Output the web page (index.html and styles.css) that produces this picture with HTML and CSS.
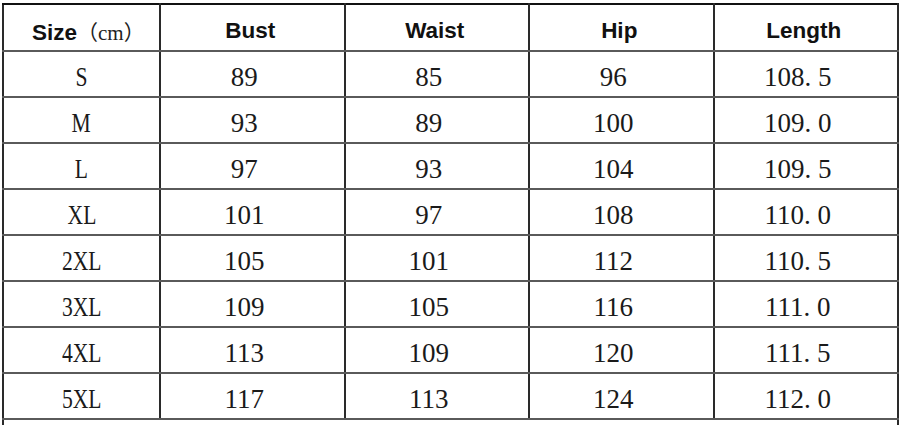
FILE: index.html
```html
<!DOCTYPE html>
<html lang="en">
<head>
<meta charset="utf-8">
<title>Size chart</title>
<link rel="stylesheet" href="styles.css">
</head>
<body>
<table class="chart">
  <colgroup>
    <col class="c-size"><col class="c-num"><col class="c-num"><col class="c-num"><col class="c-num">
  </colgroup>
  <thead>
    <tr class="head">
      <th class="first">Size<span class="unit">（cm）</span></th>
      <th>Bust</th>
      <th>Waist</th>
      <th>Hip</th>
      <th>Length</th>
    </tr>
  </thead>
  <tbody>
    <tr><td class="sz"><span>S</span></td><td>89</td><td>85</td><td>96</td><td>108<span class="dot">.</span>5</td></tr>
    <tr><td class="sz"><span>M</span></td><td>93</td><td>89</td><td>100</td><td>109<span class="dot">.</span>0</td></tr>
    <tr><td class="sz"><span>L</span></td><td>97</td><td>93</td><td>104</td><td>109<span class="dot">.</span>5</td></tr>
    <tr><td class="sz"><span>XL</span></td><td>101</td><td>97</td><td>108</td><td>110<span class="dot">.</span>0</td></tr>
    <tr><td class="sz"><span>2XL</span></td><td>105</td><td>101</td><td>112</td><td>110<span class="dot">.</span>5</td></tr>
    <tr><td class="sz"><span>3XL</span></td><td>109</td><td>105</td><td>116</td><td>111<span class="dot">.</span>0</td></tr>
    <tr><td class="sz"><span>4XL</span></td><td>113</td><td>109</td><td>120</td><td>111<span class="dot">.</span>5</td></tr>
    <tr><td class="sz"><span>5XL</span></td><td>117</td><td>113</td><td>124</td><td>112<span class="dot">.</span>0</td></tr>
    <tr class="extra"><td colspan="5"></td></tr>
  </tbody>
</table>
</body>
</html>
```

FILE: styles.css
```css
html, body {
  margin: 0;
  padding: 0;
  background: #ffffff;
}

body {
  padding: 3px 0 0 2px;
  overflow: hidden;
  height: 425px;
  box-sizing: border-box;
}

.chart {
  border-collapse: collapse;
  table-layout: fixed;
  width: 895px;
  border: 2px solid #111111;
}

.c-size { width: 157px; }
.c-num { width: 184.5px; }

.chart th,
.chart td {
  border-left: 2px solid #2a2a2a;
  border-right: 2px solid #2a2a2a;
  border-top: 2px solid #5a5a5a;
  border-bottom: 2px solid #5a5a5a;
  padding: 0;
  text-align: center;
  vertical-align: middle;
}

.chart .head {
  height: 47px;
}

.chart .head th {
  font-family: "Liberation Sans", Arial, sans-serif;
  font-weight: bold;
  font-size: 22.5px;
  color: #111111;
  padding: 6px 4px 0 0;
  border-top: 2px solid #111111;
}

.chart .head th.first {
  padding: 6px 0 0 0;
  text-align: left;
  padding-left: 28px;
}

.unit {
  font-family: "Liberation Serif", "Noto Sans CJK SC", serif;
  font-weight: normal;
  font-size: 21px;
  color: #222222;
}

.chart tbody tr {
  height: 46px;
}

.chart tbody td {
  font-family: "Liberation Serif", "Times New Roman", serif;
  font-size: 27px;
  color: #1a1a1a;
  padding: 6px 16px 0 0;
  line-height: 1;
}

.chart tbody td.sz {
  padding-right: 0;
}

.sz span {
  display: inline-block;
  transform: scaleX(0.8);
}

.dot {
  padding-right: 0.25em;
}

.chart .extra td {
  border-bottom: none;
}
```
